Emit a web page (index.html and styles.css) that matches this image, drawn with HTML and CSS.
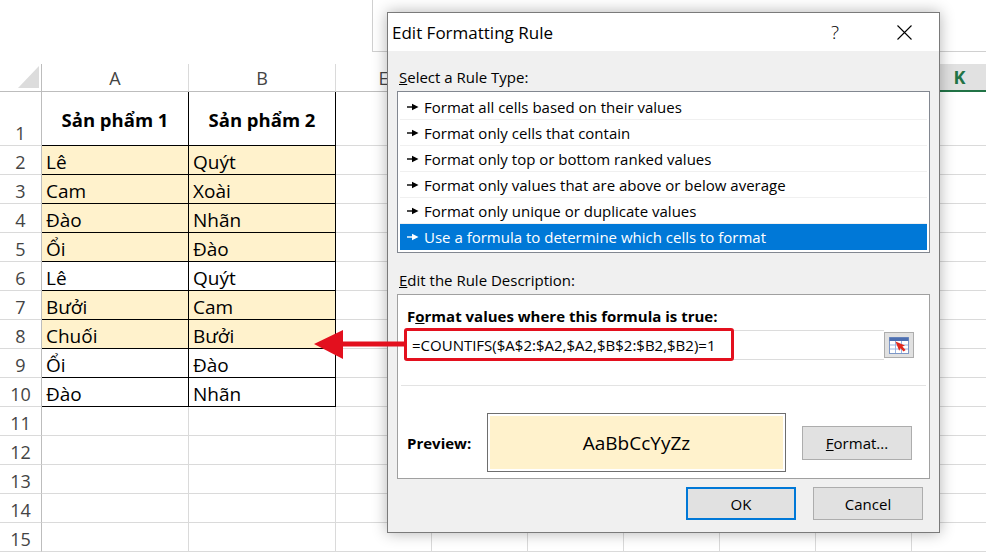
FILE: index.html
```html
<!DOCTYPE html>
<html lang="vi">
<head>
<meta charset="utf-8">
<title>Edit Formatting Rule</title>
<link rel="stylesheet" href="styles.css">
</head>
<body>
<div class="sheet">
  <div class="topbar">
    <div class="topbar-spacer"></div>
    <div class="formula-area"></div>
  </div>

  <div class="row colhead">
    <div class="corner"></div>
    <div>A</div><div>B</div><div>E</div><div></div><div></div><div></div><div></div><div></div>
    <div class="sel-col">K</div>
  </div>

  <div class="row r1">
    <div class="rn">1</div>
    <div class="c t head">Sản phẩm 1</div><div class="c t head">Sản phẩm 2</div>
    <div></div><div></div><div></div><div></div><div></div><div></div><div></div>
  </div>
  <div class="row">
    <div class="rn">2</div>
    <div class="c t fill">Lê</div><div class="c t fill">Quýt</div>
    <div></div><div></div><div></div><div></div><div></div><div></div><div></div>
  </div>
  <div class="row">
    <div class="rn">3</div>
    <div class="c t fill">Cam</div><div class="c t fill">Xoài</div>
    <div></div><div></div><div></div><div></div><div></div><div></div><div></div>
  </div>
  <div class="row">
    <div class="rn">4</div>
    <div class="c t fill">Đào</div><div class="c t fill">Nhãn</div>
    <div></div><div></div><div></div><div></div><div></div><div></div><div></div>
  </div>
  <div class="row">
    <div class="rn">5</div>
    <div class="c t fill">Ổi</div><div class="c t fill">Đào</div>
    <div></div><div></div><div></div><div></div><div></div><div></div><div></div>
  </div>
  <div class="row">
    <div class="rn">6</div>
    <div class="c t">Lê</div><div class="c t">Quýt</div>
    <div></div><div></div><div></div><div></div><div></div><div></div><div></div>
  </div>
  <div class="row">
    <div class="rn">7</div>
    <div class="c t fill">Bưởi</div><div class="c t fill">Cam</div>
    <div></div><div></div><div></div><div></div><div></div><div></div><div></div>
  </div>
  <div class="row">
    <div class="rn">8</div>
    <div class="c t fill">Chuối</div><div class="c t fill">Bưởi</div>
    <div></div><div></div><div></div><div></div><div></div><div></div><div></div>
  </div>
  <div class="row">
    <div class="rn">9</div>
    <div class="c t">Ổi</div><div class="c t">Đào</div>
    <div></div><div></div><div></div><div></div><div></div><div></div><div></div>
  </div>
  <div class="row">
    <div class="rn">10</div>
    <div class="c t">Đào</div><div class="c t">Nhãn</div>
    <div></div><div></div><div></div><div></div><div></div><div></div><div></div>
  </div>
  <div class="row">
    <div class="rn">11</div>
    <div></div><div></div><div></div><div></div><div></div><div></div><div></div><div></div><div></div>
  </div>
  <div class="row">
    <div class="rn">12</div>
    <div></div><div></div><div></div><div></div><div></div><div></div><div></div><div></div><div></div>
  </div>
  <div class="row">
    <div class="rn">13</div>
    <div></div><div></div><div></div><div></div><div></div><div></div><div></div><div></div><div></div>
  </div>
  <div class="row">
    <div class="rn">14</div>
    <div></div><div></div><div></div><div></div><div></div><div></div><div></div><div></div><div></div>
  </div>
  <div class="row">
    <div class="rn">15</div>
    <div></div><div></div><div></div><div></div><div></div><div></div><div></div><div></div><div></div>
  </div>
</div>

<div class="dialog">
  <div class="titlebar">
    <span class="title">Edit Formatting Rule</span>
    <span class="help">?</span>
    <span class="close">
      <svg width="15" height="15" viewBox="0 0 15 15"><path d="M0.5 0.5 L14.5 14.5 M14.5 0.5 L0.5 14.5" stroke="#000" stroke-width="1.1" fill="none"/></svg>
    </span>
  </div>
  <div class="dbody">
    <div class="label"><u>S</u>elect a Rule Type:</div>
    <div class="listbox">
      <div class="item"><svg class="bullet" width="12" height="8" viewBox="0 0 12 8"><rect x="0" y="3.3" width="6" height="1.4" fill="currentColor"/><path d="M5 0.8 L11.5 4 L5 7.2 Z" fill="currentColor"/></svg>Format all cells based on their values</div>
      <div class="item"><svg class="bullet" width="12" height="8" viewBox="0 0 12 8"><rect x="0" y="3.3" width="6" height="1.4" fill="currentColor"/><path d="M5 0.8 L11.5 4 L5 7.2 Z" fill="currentColor"/></svg>Format only cells that contain</div>
      <div class="item"><svg class="bullet" width="12" height="8" viewBox="0 0 12 8"><rect x="0" y="3.3" width="6" height="1.4" fill="currentColor"/><path d="M5 0.8 L11.5 4 L5 7.2 Z" fill="currentColor"/></svg>Format only top or bottom ranked values</div>
      <div class="item"><svg class="bullet" width="12" height="8" viewBox="0 0 12 8"><rect x="0" y="3.3" width="6" height="1.4" fill="currentColor"/><path d="M5 0.8 L11.5 4 L5 7.2 Z" fill="currentColor"/></svg>Format only values that are above or below average</div>
      <div class="item"><svg class="bullet" width="12" height="8" viewBox="0 0 12 8"><rect x="0" y="3.3" width="6" height="1.4" fill="currentColor"/><path d="M5 0.8 L11.5 4 L5 7.2 Z" fill="currentColor"/></svg>Format only unique or duplicate values</div>
      <div class="item sel"><svg class="bullet" width="12" height="8" viewBox="0 0 12 8"><rect x="0" y="3.3" width="6" height="1.4" fill="currentColor"/><path d="M5 0.8 L11.5 4 L5 7.2 Z" fill="currentColor"/></svg>Use a formula to determine which cells to format</div>
    </div>
    <div class="label label2"><u>E</u>dit the Rule Description:</div>
    <div class="panel">
      <div class="panel-title">F<u>o</u>rmat values where this formula is true:</div>
      <div class="formula-row">
        <div class="formula-input">=COUNTIFS($A$2:$A2,$A2,$B$2:$B2,$B2)=1</div>
        <div class="ref-btn">
          <svg class="ref-icon" width="22" height="19" viewBox="0 0 22 19">
            <rect x="1.5" y="1.5" width="19" height="16" fill="#fff" stroke="#7d97c6"/>
            <rect x="1.5" y="1.5" width="19" height="3.5" fill="#4d6fb0"/>
            <path d="M2 9 H20 M2 13 H20 M7.5 5 V17 M13.5 5 V17" stroke="#9bb5e0" stroke-width="1" fill="none"/>
            <path d="M7.5 5.5 L17 9.5 L14.4 10.6 L17.6 14 L15.6 15.6 L12.5 12.2 L11.2 14.8 Z" fill="#e2291d"/>
          </svg>
        </div>
        <div class="redbox"></div>
      </div>
      <div class="sep"></div>
      <div class="preview-row">
        <div class="preview-label">Preview:</div>
        <div class="preview-box"><div class="preview-fill">AaBbCcYyZz</div></div>
        <div class="format-btn"><span><u>F</u>ormat...</span></div>
      </div>
    </div>
    <div class="buttons">
      <div class="btn ok">OK</div>
      <div class="btn">Cancel</div>
    </div>
  </div>
</div>

<svg class="callout" width="100" height="40" viewBox="0 0 100 40">
  <rect x="30" y="15.5" width="66" height="5" fill="#e3101e"/>
  <path d="M4 18 L33 4 L33 33 Z" fill="#e3101e"/>
</svg>
</body>
</html>
```

FILE: styles.css
```css
* { box-sizing: border-box; }
html, body { margin: 0; padding: 0; }
body {
  width: 986px;
  height: 552px;
  overflow: hidden;
  position: relative;
  background: #fff;
  font-family: "Open Sans", "Noto Sans", sans-serif;
  color: #000;
}

/* ---------- spreadsheet ---------- */
.sheet { width: 986px; overflow: hidden; }
.topbar { height: 64px; display: flex; }
.topbar-spacer { width: 372px; }
.formula-area {
  flex: 1;
  height: 52px;
  border-left: 1px solid #d0d0d0;
  border-bottom: 1px solid #d0d0d0;
}

.row {
  display: grid;
  grid-template-columns: 42px 147px 147px repeat(7, 96px);
  height: 29px;
}
.row > div {
  border-right: 1px solid #dadada;
  border-bottom: 1px solid #dadada;
}

.colhead { height: 28px; }
.colhead > div {
  display: flex;
  align-items: center;
  justify-content: center;
  color: #444;
  font-size: 18px;
  border-bottom-color: #bdbdbd;
}
.colhead .corner { border-right-color: #bdbdbd; position: relative; }
.colhead .corner::after {
  content: "";
  position: absolute;
  right: 2px;
  bottom: 3px;
  width: 21px;
  height: 22px;
  background: #dcdcdc;
  clip-path: polygon(100% 0, 100% 100%, 0 100%);
}
.colhead .sel-col {
  background: #e1e1e1;
  color: #217346;
  font-weight: 700;
  border-bottom: 2px solid #217346;
}

.rn {
  display: flex;
  align-items: flex-end;
  justify-content: center;
  font-size: 18px;
  line-height: 24px;
  color: #444;
  border-right-color: #bdbdbd !important;
}

.c {
  display: flex;
  align-items: flex-end;
  padding-left: 4px;
  font-size: 19px;
  line-height: 24px;
  white-space: nowrap;
}
.t { border-right-color: #000 !important; border-bottom-color: #000 !important; }
.fill { background: #fff2cc; }

.r1 { height: 54px; }
.c.head {
  align-items: center;
  justify-content: center;
  padding: 2px 0 0 0;
  font-size: 18.5px;
  font-weight: 700;
}

/* ---------- dialog ---------- */
.dialog {
  position: absolute;
  left: 387px;
  top: 12px;
  width: 553px;
  height: 521px;
  border: 1px solid #7a7a7a;
  background: #f0f0f0;
  box-shadow: 0 0 14px rgba(0, 0, 0, 0.3);
  display: flex;
  flex-direction: column;
  font-size: 15px;
  z-index: 2;
}
.titlebar {
  height: 38px;
  background: #fff;
  display: flex;
  align-items: center;
  padding-left: 4px;
  font-size: 17px;
}
.title { flex: 1; }
.help {
  width: 30px;
  text-align: center;
  font-size: 19px;
  font-weight: 300;
  margin-right: 39px;
}
.close {
  width: 30px;
  display: flex;
  justify-content: center;
  margin-right: 20px;
}

.dbody { flex: 1; padding: 16px 9px 0 9px; }
.label { line-height: 20px; padding-left: 2px; }
.label2 { margin-top: 17px; }

.listbox {
  margin-top: 4px;
  border: 1px solid #828790;
  background: #fff;
  padding: 2px;
}
.item {
  height: 26px;
  display: flex;
  align-items: center;
  padding-left: 7px;
  border-bottom: 1px solid #f0f0f0;
  white-space: nowrap;
}
.item .bullet { margin-right: 5px; flex: none; }
.item.sel { background: #0078d7; color: #fff; border-bottom-color: #0078d7; }

.panel {
  margin-top: 4px;
  background: #fff;
  border: 1px solid #a0a0a0;
  padding: 11px 6px 6px 6px;
}
.panel-title { font-weight: 700; line-height: 20px; padding-left: 3px; }

.formula-row {
  margin-top: 4px;
  height: 30px;
  display: flex;
  position: relative;
}
.formula-input {
  width: 480px;
  border: 1px solid #dcdcdc;
  border-right: none;
  display: flex;
  align-items: center;
  padding-left: 7px;
  white-space: nowrap;
}
.ref-btn {
  width: 30px;
  height: 26px;
  align-self: center;
  background: #e1e1e1;
  border: 1px solid #adadad;
  display: flex;
  align-items: center;
  justify-content: center;
}
.ref-icon { width: 22px; height: 19px; flex: none; }
.redbox {
  position: absolute;
  left: 0;
  top: -2px;
  width: 330px;
  height: 33px;
  border: 3px solid #e3101e;
  border-radius: 3px;
}

.sep { margin: 25px -3px 0; height: 1px; background: #e3e3e3; }

.preview-row {
  margin-top: 27px;
  height: 59px;
  display: flex;
  align-items: center;
}
.preview-label { width: 83px; padding-left: 3px; font-weight: 700; }
.preview-box {
  width: 299px;
  height: 59px;
  border: 1px solid #6e6e6e;
  padding: 2px;
  background: #fff;
}
.preview-fill {
  height: 100%;
  background: #fff2cc;
  display: flex;
  align-items: center;
  justify-content: center;
  font-size: 19px;
}
.format-btn {
  margin-left: 16px;
  width: 110px;
  height: 34px;
  background: #e1e1e1;
  border: 1px solid #adadad;
  display: flex;
  align-items: center;
  justify-content: center;
}

.buttons {
  display: flex;
  justify-content: flex-end;
  gap: 17px;
  margin-top: 8px;
  padding-right: 7px;
}
.btn {
  width: 110px;
  height: 33px;
  background: #e1e1e1;
  border: 1px solid #adadad;
  display: flex;
  align-items: center;
  justify-content: center;
}
.btn.ok { border: 2px solid #0078d7; }

/* ---------- annotation arrow ---------- */
.callout {
  position: absolute;
  left: 310px;
  top: 326px;
  z-index: 3;
}
```
